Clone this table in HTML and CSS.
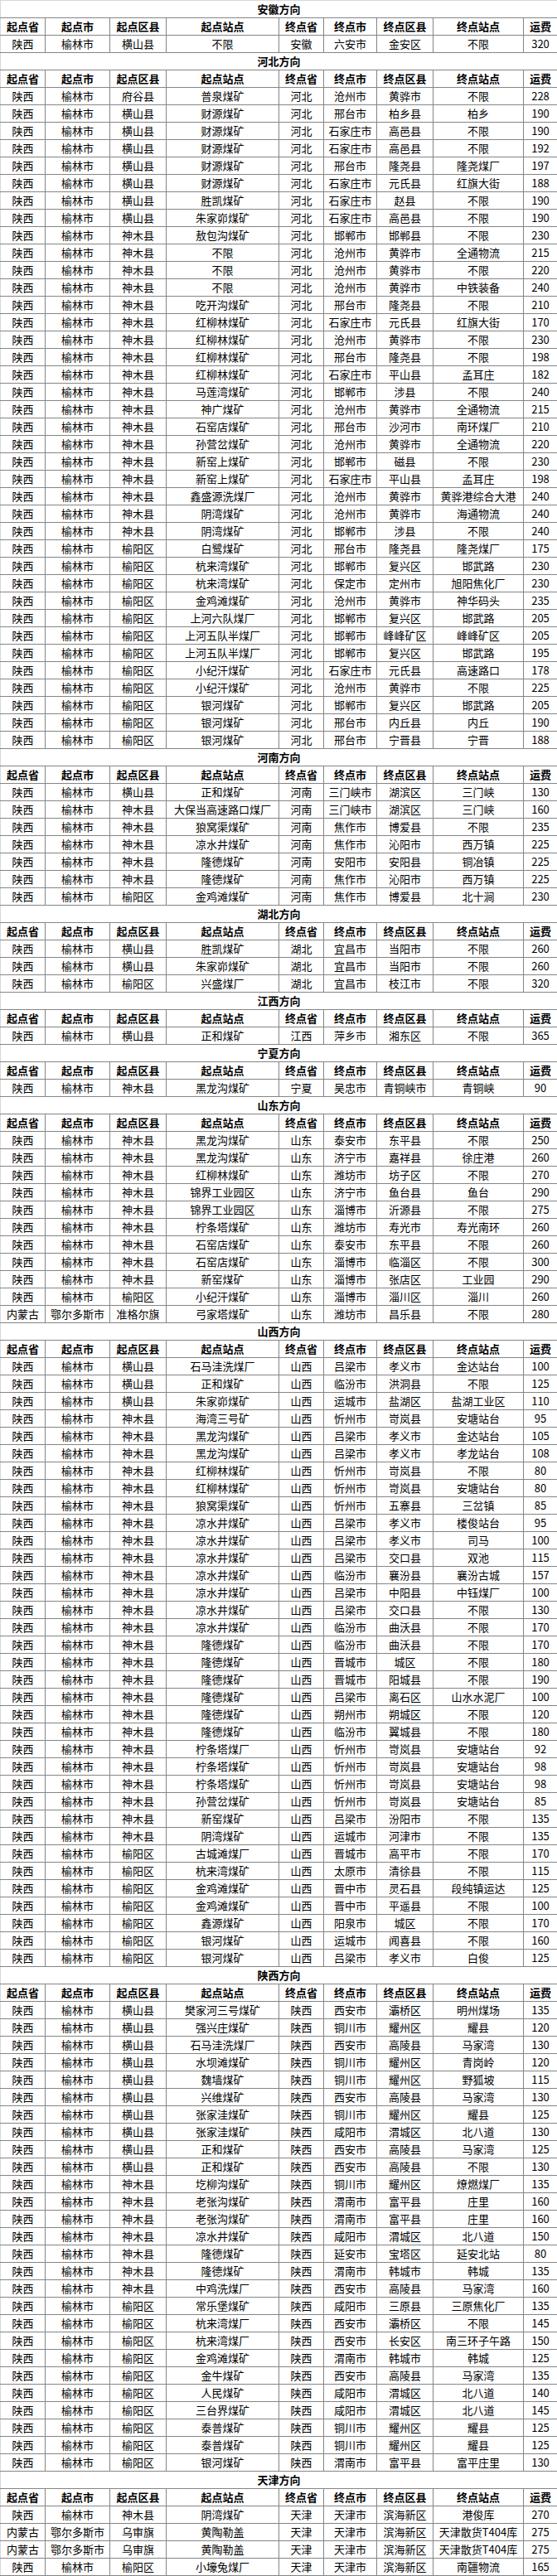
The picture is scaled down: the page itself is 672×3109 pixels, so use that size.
FILE: index.html
```html
<!DOCTYPE html>
<html lang="zh-CN">
<head>
<meta charset="utf-8">
<title>运费表</title>
<link rel="stylesheet" href="styles.css">
</head>
<body>
<table class="rates">
<colgroup><col class="c1"><col class="c2"><col class="c3"><col class="c4"><col class="c5"><col class="c6"><col class="c7"><col class="c8"><col class="c9"></colgroup>
<tbody>
<tr class="title first"><td colspan="9">安徽方向</td></tr>
<tr class="head"><td>起点省</td><td>起点市</td><td>起点区县</td><td>起点站点</td><td>终点省</td><td>终点市</td><td>终点区县</td><td>终点站点</td><td>运费</td></tr>
<tr><td>陕西</td><td>榆林市</td><td>横山县</td><td>不限</td><td>安徽</td><td>六安市</td><td>金安区</td><td>不限</td><td>320</td></tr>

<tr class="title"><td colspan="9">河北方向</td></tr>
<tr class="head"><td>起点省</td><td>起点市</td><td>起点区县</td><td>起点站点</td><td>终点省</td><td>终点市</td><td>终点区县</td><td>终点站点</td><td>运费</td></tr>
<tr><td>陕西</td><td>榆林市</td><td>府谷县</td><td>普泉煤矿</td><td>河北</td><td>沧州市</td><td>黄骅市</td><td>不限</td><td>228</td></tr>
<tr><td>陕西</td><td>榆林市</td><td>横山县</td><td>财源煤矿</td><td>河北</td><td>邢台市</td><td>柏乡县</td><td>柏乡</td><td>190</td></tr>
<tr><td>陕西</td><td>榆林市</td><td>横山县</td><td>财源煤矿</td><td>河北</td><td>石家庄市</td><td>高邑县</td><td>不限</td><td>190</td></tr>
<tr><td>陕西</td><td>榆林市</td><td>横山县</td><td>财源煤矿</td><td>河北</td><td>石家庄市</td><td>高邑县</td><td>不限</td><td>192</td></tr>
<tr><td>陕西</td><td>榆林市</td><td>横山县</td><td>财源煤矿</td><td>河北</td><td>邢台市</td><td>隆尧县</td><td>隆尧煤厂</td><td>197</td></tr>
<tr><td>陕西</td><td>榆林市</td><td>横山县</td><td>财源煤矿</td><td>河北</td><td>石家庄市</td><td>元氏县</td><td>红旗大街</td><td>188</td></tr>
<tr><td>陕西</td><td>榆林市</td><td>横山县</td><td>胜凯煤矿</td><td>河北</td><td>石家庄市</td><td>赵县</td><td>不限</td><td>190</td></tr>
<tr><td>陕西</td><td>榆林市</td><td>横山县</td><td>朱家峁煤矿</td><td>河北</td><td>石家庄市</td><td>高邑县</td><td>不限</td><td>190</td></tr>
<tr><td>陕西</td><td>榆林市</td><td>神木县</td><td>敖包沟煤矿</td><td>河北</td><td>邯郸市</td><td>邯郸县</td><td>不限</td><td>230</td></tr>
<tr><td>陕西</td><td>榆林市</td><td>神木县</td><td>不限</td><td>河北</td><td>沧州市</td><td>黄骅市</td><td>全通物流</td><td>215</td></tr>
<tr><td>陕西</td><td>榆林市</td><td>神木县</td><td>不限</td><td>河北</td><td>沧州市</td><td>黄骅市</td><td>不限</td><td>220</td></tr>
<tr><td>陕西</td><td>榆林市</td><td>神木县</td><td>不限</td><td>河北</td><td>沧州市</td><td>黄骅市</td><td>中铁装备</td><td>240</td></tr>
<tr><td>陕西</td><td>榆林市</td><td>神木县</td><td>吃开沟煤矿</td><td>河北</td><td>邢台市</td><td>隆尧县</td><td>不限</td><td>210</td></tr>
<tr><td>陕西</td><td>榆林市</td><td>神木县</td><td>红柳林煤矿</td><td>河北</td><td>石家庄市</td><td>元氏县</td><td>红旗大街</td><td>170</td></tr>
<tr><td>陕西</td><td>榆林市</td><td>神木县</td><td>红柳林煤矿</td><td>河北</td><td>沧州市</td><td>黄骅市</td><td>不限</td><td>230</td></tr>
<tr><td>陕西</td><td>榆林市</td><td>神木县</td><td>红柳林煤矿</td><td>河北</td><td>邢台市</td><td>隆尧县</td><td>不限</td><td>198</td></tr>
<tr><td>陕西</td><td>榆林市</td><td>神木县</td><td>红柳林煤矿</td><td>河北</td><td>石家庄市</td><td>平山县</td><td>孟耳庄</td><td>182</td></tr>
<tr><td>陕西</td><td>榆林市</td><td>神木县</td><td>马莲湾煤矿</td><td>河北</td><td>邯郸市</td><td>涉县</td><td>不限</td><td>240</td></tr>
<tr><td>陕西</td><td>榆林市</td><td>神木县</td><td>神广煤矿</td><td>河北</td><td>沧州市</td><td>黄骅市</td><td>全通物流</td><td>215</td></tr>
<tr><td>陕西</td><td>榆林市</td><td>神木县</td><td>石窑店煤矿</td><td>河北</td><td>邢台市</td><td>沙河市</td><td>南环煤厂</td><td>210</td></tr>
<tr><td>陕西</td><td>榆林市</td><td>神木县</td><td>孙营岔煤矿</td><td>河北</td><td>沧州市</td><td>黄骅市</td><td>全通物流</td><td>220</td></tr>
<tr><td>陕西</td><td>榆林市</td><td>神木县</td><td>新窑上煤矿</td><td>河北</td><td>邯郸市</td><td>磁县</td><td>不限</td><td>230</td></tr>
<tr><td>陕西</td><td>榆林市</td><td>神木县</td><td>新窑上煤矿</td><td>河北</td><td>石家庄市</td><td>平山县</td><td>孟耳庄</td><td>198</td></tr>
<tr><td>陕西</td><td>榆林市</td><td>神木县</td><td>鑫盛源洗煤厂</td><td>河北</td><td>沧州市</td><td>黄骅市</td><td>黄骅港综合大港</td><td>240</td></tr>
<tr><td>陕西</td><td>榆林市</td><td>神木县</td><td>阴湾煤矿</td><td>河北</td><td>沧州市</td><td>黄骅市</td><td>海通物流</td><td>240</td></tr>
<tr><td>陕西</td><td>榆林市</td><td>神木县</td><td>阴湾煤矿</td><td>河北</td><td>邯郸市</td><td>涉县</td><td>不限</td><td>240</td></tr>
<tr><td>陕西</td><td>榆林市</td><td>榆阳区</td><td>白鹭煤矿</td><td>河北</td><td>邢台市</td><td>隆尧县</td><td>隆尧煤厂</td><td>175</td></tr>
<tr><td>陕西</td><td>榆林市</td><td>榆阳区</td><td>杭来湾煤矿</td><td>河北</td><td>邯郸市</td><td>复兴区</td><td>邯武路</td><td>230</td></tr>
<tr><td>陕西</td><td>榆林市</td><td>榆阳区</td><td>杭来湾煤矿</td><td>河北</td><td>保定市</td><td>定州市</td><td>旭阳焦化厂</td><td>230</td></tr>
<tr><td>陕西</td><td>榆林市</td><td>榆阳区</td><td>金鸡滩煤矿</td><td>河北</td><td>沧州市</td><td>黄骅市</td><td>神华码头</td><td>235</td></tr>
<tr><td>陕西</td><td>榆林市</td><td>榆阳区</td><td>上河六队煤厂</td><td>河北</td><td>邯郸市</td><td>复兴区</td><td>邯武路</td><td>205</td></tr>
<tr><td>陕西</td><td>榆林市</td><td>榆阳区</td><td>上河五队半煤厂</td><td>河北</td><td>邯郸市</td><td>峰峰矿区</td><td>峰峰矿区</td><td>205</td></tr>
<tr><td>陕西</td><td>榆林市</td><td>榆阳区</td><td>上河五队半煤厂</td><td>河北</td><td>邯郸市</td><td>复兴区</td><td>邯武路</td><td>195</td></tr>
<tr><td>陕西</td><td>榆林市</td><td>榆阳区</td><td>小纪汗煤矿</td><td>河北</td><td>石家庄市</td><td>元氏县</td><td>高速路口</td><td>178</td></tr>
<tr><td>陕西</td><td>榆林市</td><td>榆阳区</td><td>小纪汗煤矿</td><td>河北</td><td>沧州市</td><td>黄骅市</td><td>不限</td><td>225</td></tr>
<tr><td>陕西</td><td>榆林市</td><td>榆阳区</td><td>银河煤矿</td><td>河北</td><td>邯郸市</td><td>复兴区</td><td>邯武路</td><td>205</td></tr>
<tr><td>陕西</td><td>榆林市</td><td>榆阳区</td><td>银河煤矿</td><td>河北</td><td>邢台市</td><td>内丘县</td><td>内丘</td><td>190</td></tr>
<tr><td>陕西</td><td>榆林市</td><td>榆阳区</td><td>银河煤矿</td><td>河北</td><td>邢台市</td><td>宁晋县</td><td>宁晋</td><td>188</td></tr>

<tr class="title"><td colspan="9">河南方向</td></tr>
<tr class="head"><td>起点省</td><td>起点市</td><td>起点区县</td><td>起点站点</td><td>终点省</td><td>终点市</td><td>终点区县</td><td>终点站点</td><td>运费</td></tr>
<tr><td>陕西</td><td>榆林市</td><td>横山县</td><td>正和煤矿</td><td>河南</td><td>三门峡市</td><td>湖滨区</td><td>三门峡</td><td>130</td></tr>
<tr><td>陕西</td><td>榆林市</td><td>神木县</td><td>大保当高速路口煤厂</td><td>河南</td><td>三门峡市</td><td>湖滨区</td><td>三门峡</td><td>160</td></tr>
<tr><td>陕西</td><td>榆林市</td><td>神木县</td><td>狼窝渠煤矿</td><td>河南</td><td>焦作市</td><td>博爱县</td><td>不限</td><td>235</td></tr>
<tr><td>陕西</td><td>榆林市</td><td>神木县</td><td>凉水井煤矿</td><td>河南</td><td>焦作市</td><td>沁阳市</td><td>西万镇</td><td>225</td></tr>
<tr><td>陕西</td><td>榆林市</td><td>神木县</td><td>隆德煤矿</td><td>河南</td><td>安阳市</td><td>安阳县</td><td>铜冶镇</td><td>225</td></tr>
<tr><td>陕西</td><td>榆林市</td><td>神木县</td><td>隆德煤矿</td><td>河南</td><td>焦作市</td><td>沁阳市</td><td>西万镇</td><td>225</td></tr>
<tr><td>陕西</td><td>榆林市</td><td>榆阳区</td><td>金鸡滩煤矿</td><td>河南</td><td>焦作市</td><td>博爱县</td><td>北十涧</td><td>230</td></tr>

<tr class="title"><td colspan="9">湖北方向</td></tr>
<tr class="head"><td>起点省</td><td>起点市</td><td>起点区县</td><td>起点站点</td><td>终点省</td><td>终点市</td><td>终点区县</td><td>终点站点</td><td>运费</td></tr>
<tr><td>陕西</td><td>榆林市</td><td>横山县</td><td>胜凯煤矿</td><td>湖北</td><td>宜昌市</td><td>当阳市</td><td>不限</td><td>260</td></tr>
<tr><td>陕西</td><td>榆林市</td><td>横山县</td><td>朱家峁煤矿</td><td>湖北</td><td>宜昌市</td><td>当阳市</td><td>不限</td><td>260</td></tr>
<tr><td>陕西</td><td>榆林市</td><td>榆阳区</td><td>兴盛煤厂</td><td>湖北</td><td>宜昌市</td><td>枝江市</td><td>不限</td><td>320</td></tr>

<tr class="title"><td colspan="9">江西方向</td></tr>
<tr class="head"><td>起点省</td><td>起点市</td><td>起点区县</td><td>起点站点</td><td>终点省</td><td>终点市</td><td>终点区县</td><td>终点站点</td><td>运费</td></tr>
<tr><td>陕西</td><td>榆林市</td><td>横山县</td><td>正和煤矿</td><td>江西</td><td>萍乡市</td><td>湘东区</td><td>不限</td><td>365</td></tr>

<tr class="title"><td colspan="9">宁夏方向</td></tr>
<tr class="head"><td>起点省</td><td>起点市</td><td>起点区县</td><td>起点站点</td><td>终点省</td><td>终点市</td><td>终点区县</td><td>终点站点</td><td>运费</td></tr>
<tr><td>陕西</td><td>榆林市</td><td>神木县</td><td>黑龙沟煤矿</td><td>宁夏</td><td>吴忠市</td><td>青铜峡市</td><td>青铜峡</td><td>90</td></tr>

<tr class="title"><td colspan="9">山东方向</td></tr>
<tr class="head"><td>起点省</td><td>起点市</td><td>起点区县</td><td>起点站点</td><td>终点省</td><td>终点市</td><td>终点区县</td><td>终点站点</td><td>运费</td></tr>
<tr><td>陕西</td><td>榆林市</td><td>神木县</td><td>黑龙沟煤矿</td><td>山东</td><td>泰安市</td><td>东平县</td><td>不限</td><td>250</td></tr>
<tr><td>陕西</td><td>榆林市</td><td>神木县</td><td>黑龙沟煤矿</td><td>山东</td><td>济宁市</td><td>嘉祥县</td><td>徐庄港</td><td>260</td></tr>
<tr><td>陕西</td><td>榆林市</td><td>神木县</td><td>红柳林煤矿</td><td>山东</td><td>潍坊市</td><td>坊子区</td><td>不限</td><td>270</td></tr>
<tr><td>陕西</td><td>榆林市</td><td>神木县</td><td>锦界工业园区</td><td>山东</td><td>济宁市</td><td>鱼台县</td><td>鱼台</td><td>290</td></tr>
<tr><td>陕西</td><td>榆林市</td><td>神木县</td><td>锦界工业园区</td><td>山东</td><td>淄博市</td><td>沂源县</td><td>不限</td><td>275</td></tr>
<tr><td>陕西</td><td>榆林市</td><td>神木县</td><td>柠条塔煤矿</td><td>山东</td><td>潍坊市</td><td>寿光市</td><td>寿光南环</td><td>260</td></tr>
<tr><td>陕西</td><td>榆林市</td><td>神木县</td><td>石窑店煤矿</td><td>山东</td><td>泰安市</td><td>东平县</td><td>不限</td><td>260</td></tr>
<tr><td>陕西</td><td>榆林市</td><td>神木县</td><td>石窑店煤矿</td><td>山东</td><td>淄博市</td><td>临淄区</td><td>不限</td><td>300</td></tr>
<tr><td>陕西</td><td>榆林市</td><td>神木县</td><td>新窑煤矿</td><td>山东</td><td>淄博市</td><td>张店区</td><td>工业园</td><td>290</td></tr>
<tr><td>陕西</td><td>榆林市</td><td>榆阳区</td><td>小纪汗煤矿</td><td>山东</td><td>淄博市</td><td>淄川区</td><td>淄川</td><td>260</td></tr>
<tr><td>内蒙古</td><td>鄂尔多斯市</td><td>准格尔旗</td><td>弓家塔煤矿</td><td>山东</td><td>潍坊市</td><td>昌乐县</td><td>不限</td><td>280</td></tr>

<tr class="title"><td colspan="9">山西方向</td></tr>
<tr class="head"><td>起点省</td><td>起点市</td><td>起点区县</td><td>起点站点</td><td>终点省</td><td>终点市</td><td>终点区县</td><td>终点站点</td><td>运费</td></tr>
<tr><td>陕西</td><td>榆林市</td><td>横山县</td><td>石马洼洗煤厂</td><td>山西</td><td>吕梁市</td><td>孝义市</td><td>金达站台</td><td>100</td></tr>
<tr><td>陕西</td><td>榆林市</td><td>横山县</td><td>正和煤矿</td><td>山西</td><td>临汾市</td><td>洪洞县</td><td>不限</td><td>125</td></tr>
<tr><td>陕西</td><td>榆林市</td><td>横山县</td><td>朱家峁煤矿</td><td>山西</td><td>运城市</td><td>盐湖区</td><td>盐湖工业区</td><td>110</td></tr>
<tr><td>陕西</td><td>榆林市</td><td>神木县</td><td>海湾三号矿</td><td>山西</td><td>忻州市</td><td>岢岚县</td><td>安塘站台</td><td>95</td></tr>
<tr><td>陕西</td><td>榆林市</td><td>神木县</td><td>黑龙沟煤矿</td><td>山西</td><td>吕梁市</td><td>孝义市</td><td>金达站台</td><td>105</td></tr>
<tr><td>陕西</td><td>榆林市</td><td>神木县</td><td>黑龙沟煤矿</td><td>山西</td><td>吕梁市</td><td>孝义市</td><td>孝龙站台</td><td>108</td></tr>
<tr><td>陕西</td><td>榆林市</td><td>神木县</td><td>红柳林煤矿</td><td>山西</td><td>忻州市</td><td>岢岚县</td><td>不限</td><td>80</td></tr>
<tr><td>陕西</td><td>榆林市</td><td>神木县</td><td>红柳林煤矿</td><td>山西</td><td>忻州市</td><td>岢岚县</td><td>安塘站台</td><td>80</td></tr>
<tr><td>陕西</td><td>榆林市</td><td>神木县</td><td>狼窝渠煤矿</td><td>山西</td><td>忻州市</td><td>五寨县</td><td>三岔镇</td><td>85</td></tr>
<tr><td>陕西</td><td>榆林市</td><td>神木县</td><td>凉水井煤矿</td><td>山西</td><td>吕梁市</td><td>孝义市</td><td>楼俊站台</td><td>95</td></tr>
<tr><td>陕西</td><td>榆林市</td><td>神木县</td><td>凉水井煤矿</td><td>山西</td><td>吕梁市</td><td>孝义市</td><td>司马</td><td>100</td></tr>
<tr><td>陕西</td><td>榆林市</td><td>神木县</td><td>凉水井煤矿</td><td>山西</td><td>吕梁市</td><td>交口县</td><td>双池</td><td>115</td></tr>
<tr><td>陕西</td><td>榆林市</td><td>神木县</td><td>凉水井煤矿</td><td>山西</td><td>临汾市</td><td>襄汾县</td><td>襄汾古城</td><td>157</td></tr>
<tr><td>陕西</td><td>榆林市</td><td>神木县</td><td>凉水井煤矿</td><td>山西</td><td>吕梁市</td><td>中阳县</td><td>中钰煤厂</td><td>100</td></tr>
<tr><td>陕西</td><td>榆林市</td><td>神木县</td><td>凉水井煤矿</td><td>山西</td><td>吕梁市</td><td>交口县</td><td>不限</td><td>130</td></tr>
<tr><td>陕西</td><td>榆林市</td><td>神木县</td><td>凉水井煤矿</td><td>山西</td><td>临汾市</td><td>曲沃县</td><td>不限</td><td>170</td></tr>
<tr><td>陕西</td><td>榆林市</td><td>神木县</td><td>隆德煤矿</td><td>山西</td><td>临汾市</td><td>曲沃县</td><td>不限</td><td>170</td></tr>
<tr><td>陕西</td><td>榆林市</td><td>神木县</td><td>隆德煤矿</td><td>山西</td><td>晋城市</td><td>城区</td><td>不限</td><td>180</td></tr>
<tr><td>陕西</td><td>榆林市</td><td>神木县</td><td>隆德煤矿</td><td>山西</td><td>晋城市</td><td>阳城县</td><td>不限</td><td>190</td></tr>
<tr><td>陕西</td><td>榆林市</td><td>神木县</td><td>隆德煤矿</td><td>山西</td><td>吕梁市</td><td>离石区</td><td>山水水泥厂</td><td>100</td></tr>
<tr><td>陕西</td><td>榆林市</td><td>神木县</td><td>隆德煤矿</td><td>山西</td><td>朔州市</td><td>朔城区</td><td>不限</td><td>120</td></tr>
<tr><td>陕西</td><td>榆林市</td><td>神木县</td><td>隆德煤矿</td><td>山西</td><td>临汾市</td><td>翼城县</td><td>不限</td><td>180</td></tr>
<tr><td>陕西</td><td>榆林市</td><td>神木县</td><td>柠条塔煤厂</td><td>山西</td><td>忻州市</td><td>岢岚县</td><td>安塘站台</td><td>92</td></tr>
<tr><td>陕西</td><td>榆林市</td><td>神木县</td><td>柠条塔煤矿</td><td>山西</td><td>忻州市</td><td>岢岚县</td><td>安塘站台</td><td>98</td></tr>
<tr><td>陕西</td><td>榆林市</td><td>神木县</td><td>柠条塔煤矿</td><td>山西</td><td>忻州市</td><td>岢岚县</td><td>安塘站台</td><td>98</td></tr>
<tr><td>陕西</td><td>榆林市</td><td>神木县</td><td>孙营岔煤矿</td><td>山西</td><td>忻州市</td><td>岢岚县</td><td>安塘站台</td><td>85</td></tr>
<tr><td>陕西</td><td>榆林市</td><td>神木县</td><td>新窑煤矿</td><td>山西</td><td>吕梁市</td><td>汾阳市</td><td>不限</td><td>135</td></tr>
<tr><td>陕西</td><td>榆林市</td><td>神木县</td><td>阴湾煤矿</td><td>山西</td><td>运城市</td><td>河津市</td><td>不限</td><td>135</td></tr>
<tr><td>陕西</td><td>榆林市</td><td>榆阳区</td><td>古城滩煤厂</td><td>山西</td><td>晋城市</td><td>高平市</td><td>不限</td><td>170</td></tr>
<tr><td>陕西</td><td>榆林市</td><td>榆阳区</td><td>杭来湾煤矿</td><td>山西</td><td>太原市</td><td>清徐县</td><td>不限</td><td>115</td></tr>
<tr><td>陕西</td><td>榆林市</td><td>榆阳区</td><td>金鸡滩煤矿</td><td>山西</td><td>晋中市</td><td>灵石县</td><td>段纯镇运达</td><td>125</td></tr>
<tr><td>陕西</td><td>榆林市</td><td>榆阳区</td><td>金鸡滩煤矿</td><td>山西</td><td>晋中市</td><td>平遥县</td><td>不限</td><td>100</td></tr>
<tr><td>陕西</td><td>榆林市</td><td>榆阳区</td><td>鑫源煤矿</td><td>山西</td><td>阳泉市</td><td>城区</td><td>不限</td><td>170</td></tr>
<tr><td>陕西</td><td>榆林市</td><td>榆阳区</td><td>银河煤矿</td><td>山西</td><td>运城市</td><td>闻喜县</td><td>不限</td><td>160</td></tr>
<tr><td>陕西</td><td>榆林市</td><td>榆阳区</td><td>银河煤矿</td><td>山西</td><td>吕梁市</td><td>孝义市</td><td>白俊</td><td>125</td></tr>

<tr class="title"><td colspan="9">陕西方向</td></tr>
<tr class="head"><td>起点省</td><td>起点市</td><td>起点区县</td><td>起点站点</td><td>终点省</td><td>终点市</td><td>终点区县</td><td>终点站点</td><td>运费</td></tr>
<tr><td>陕西</td><td>榆林市</td><td>横山县</td><td>樊家河三号煤矿</td><td>陕西</td><td>西安市</td><td>灞桥区</td><td>明州煤场</td><td>135</td></tr>
<tr><td>陕西</td><td>榆林市</td><td>横山县</td><td>强兴庄煤矿</td><td>陕西</td><td>铜川市</td><td>耀州区</td><td>耀县</td><td>120</td></tr>
<tr><td>陕西</td><td>榆林市</td><td>横山县</td><td>石马洼洗煤厂</td><td>陕西</td><td>西安市</td><td>高陵县</td><td>马家湾</td><td>130</td></tr>
<tr><td>陕西</td><td>榆林市</td><td>横山县</td><td>水坝滩煤矿</td><td>陕西</td><td>铜川市</td><td>耀州区</td><td>青岗岭</td><td>120</td></tr>
<tr><td>陕西</td><td>榆林市</td><td>横山县</td><td>魏墙煤矿</td><td>陕西</td><td>铜川市</td><td>耀州区</td><td>野狐坡</td><td>115</td></tr>
<tr><td>陕西</td><td>榆林市</td><td>横山县</td><td>兴维煤矿</td><td>陕西</td><td>西安市</td><td>高陵县</td><td>马家湾</td><td>130</td></tr>
<tr><td>陕西</td><td>榆林市</td><td>横山县</td><td>张家洼煤矿</td><td>陕西</td><td>铜川市</td><td>耀州区</td><td>耀县</td><td>125</td></tr>
<tr><td>陕西</td><td>榆林市</td><td>横山县</td><td>张家洼煤矿</td><td>陕西</td><td>咸阳市</td><td>渭城区</td><td>北八道</td><td>130</td></tr>
<tr><td>陕西</td><td>榆林市</td><td>横山县</td><td>正和煤矿</td><td>陕西</td><td>西安市</td><td>高陵县</td><td>马家湾</td><td>125</td></tr>
<tr><td>陕西</td><td>榆林市</td><td>横山县</td><td>正和煤矿</td><td>陕西</td><td>西安市</td><td>高陵县</td><td>不限</td><td>130</td></tr>
<tr><td>陕西</td><td>榆林市</td><td>神木县</td><td>圪柳沟煤矿</td><td>陕西</td><td>铜川市</td><td>耀州区</td><td>燎燃煤厂</td><td>135</td></tr>
<tr><td>陕西</td><td>榆林市</td><td>神木县</td><td>老张沟煤矿</td><td>陕西</td><td>渭南市</td><td>富平县</td><td>庄里</td><td>160</td></tr>
<tr><td>陕西</td><td>榆林市</td><td>神木县</td><td>老张沟煤矿</td><td>陕西</td><td>渭南市</td><td>富平县</td><td>庄里</td><td>160</td></tr>
<tr><td>陕西</td><td>榆林市</td><td>神木县</td><td>凉水井煤矿</td><td>陕西</td><td>咸阳市</td><td>渭城区</td><td>北八道</td><td>150</td></tr>
<tr><td>陕西</td><td>榆林市</td><td>神木县</td><td>隆德煤矿</td><td>陕西</td><td>延安市</td><td>宝塔区</td><td>延安北站</td><td>80</td></tr>
<tr><td>陕西</td><td>榆林市</td><td>神木县</td><td>隆德煤矿</td><td>陕西</td><td>渭南市</td><td>韩城市</td><td>韩城</td><td>135</td></tr>
<tr><td>陕西</td><td>榆林市</td><td>神木县</td><td>中鸡洗煤厂</td><td>陕西</td><td>西安市</td><td>高陵县</td><td>马家湾</td><td>160</td></tr>
<tr><td>陕西</td><td>榆林市</td><td>榆阳区</td><td>常乐堡煤矿</td><td>陕西</td><td>咸阳市</td><td>三原县</td><td>三原焦化厂</td><td>135</td></tr>
<tr><td>陕西</td><td>榆林市</td><td>榆阳区</td><td>杭来湾煤厂</td><td>陕西</td><td>西安市</td><td>灞桥区</td><td>不限</td><td>145</td></tr>
<tr><td>陕西</td><td>榆林市</td><td>榆阳区</td><td>杭来湾煤厂</td><td>陕西</td><td>西安市</td><td>长安区</td><td>南三环子午路</td><td>150</td></tr>
<tr><td>陕西</td><td>榆林市</td><td>榆阳区</td><td>金鸡滩煤矿</td><td>陕西</td><td>渭南市</td><td>韩城市</td><td>韩城</td><td>125</td></tr>
<tr><td>陕西</td><td>榆林市</td><td>榆阳区</td><td>金牛煤矿</td><td>陕西</td><td>西安市</td><td>高陵县</td><td>马家湾</td><td>135</td></tr>
<tr><td>陕西</td><td>榆林市</td><td>榆阳区</td><td>人民煤矿</td><td>陕西</td><td>咸阳市</td><td>渭城区</td><td>北八道</td><td>140</td></tr>
<tr><td>陕西</td><td>榆林市</td><td>榆阳区</td><td>三台界煤矿</td><td>陕西</td><td>咸阳市</td><td>渭城区</td><td>北八道</td><td>145</td></tr>
<tr><td>陕西</td><td>榆林市</td><td>榆阳区</td><td>泰普煤矿</td><td>陕西</td><td>铜川市</td><td>耀州区</td><td>耀县</td><td>125</td></tr>
<tr><td>陕西</td><td>榆林市</td><td>榆阳区</td><td>泰普煤矿</td><td>陕西</td><td>铜川市</td><td>耀州区</td><td>耀县</td><td>125</td></tr>
<tr><td>陕西</td><td>榆林市</td><td>榆阳区</td><td>银河煤矿</td><td>陕西</td><td>渭南市</td><td>富平县</td><td>富平庄里</td><td>130</td></tr>

<tr class="title"><td colspan="9">天津方向</td></tr>
<tr class="head"><td>起点省</td><td>起点市</td><td>起点区县</td><td>起点站点</td><td>终点省</td><td>终点市</td><td>终点区县</td><td>终点站点</td><td>运费</td></tr>
<tr><td>陕西</td><td>榆林市</td><td>神木县</td><td>阴湾煤矿</td><td>天津</td><td>天津市</td><td>滨海新区</td><td>港俊库</td><td>270</td></tr>
<tr><td>内蒙古</td><td>鄂尔多斯市</td><td>乌审旗</td><td>黄陶勒盖</td><td>天津</td><td>天津市</td><td>滨海新区</td><td>天津散货T404库</td><td>275</td></tr>
<tr><td>内蒙古</td><td>鄂尔多斯市</td><td>乌审旗</td><td>黄陶勒盖</td><td>天津</td><td>天津市</td><td>滨海新区</td><td>天津散货T404库</td><td>275</td></tr>
<tr><td>陕西</td><td>榆林市</td><td>榆阳区</td><td>小壕兔煤厂</td><td>天津</td><td>天津市</td><td>滨海新区</td><td>南疆物流</td><td>165</td></tr>
</tbody>
</table>
</body>
</html>
```

FILE: styles.css
```css
html, body {
  margin: 0;
  padding: 0;
  background: #ffffff;
}

.rates {
  border-collapse: collapse;
  table-layout: fixed;
  width: 672px;
  font-family: "Noto Sans CJK SC", "Liberation Sans", sans-serif;
  font-size: 13px;
  color: #000000;
}

.c1 { width: 54px; }
.c2 { width: 78px; }
.c3 { width: 68px; }
.c4 { width: 136px; }
.c5 { width: 54px; }
.c6 { width: 64px; }
.c7 { width: 68px; }
.c8 { width: 109px; }
.c9 { width: 41px; }

.rates td {
  border: 1px solid #858585;
  height: 20px;
  padding: 0;
  line-height: 20px;
  text-align: center;
  vertical-align: middle;
  white-space: nowrap;
  overflow: hidden;
}

.rates td:first-child {
  border-left-color: #d8d8d8;
}

.first td {
  border-top-color: #d8d8d8;
}

.title td,
.head td {
  font-weight: bold;
}
```
